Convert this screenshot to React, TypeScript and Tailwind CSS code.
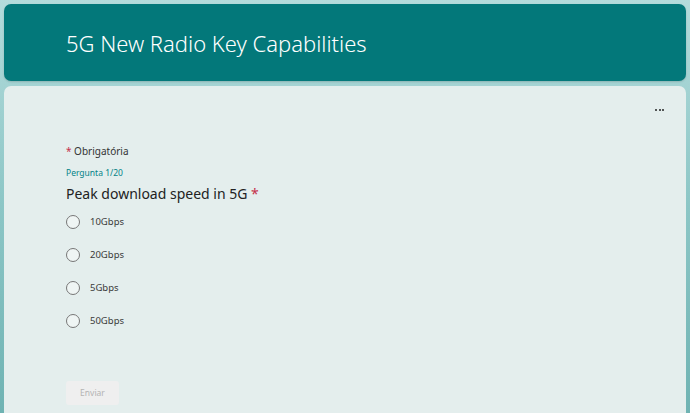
import React from "react";

const options = ["10Gbps", "20Gbps", "5Gbps", "50Gbps"];

export default function App() {
  return (
    <div
      className="w-[690px] h-[413px] overflow-hidden bg-gradient-to-b from-[#b4dcdc] via-[#8cc6c6] to-[#6fb3b3] px-[4px] pt-[4px] flex flex-col gap-[5px]"
      style={{ fontFamily: '"Noto Sans", "Open Sans", sans-serif' }}
    >
      <div className="h-[77px] shrink-0 rounded-[7px] bg-[#03787a] flex items-center pl-[62px] pt-[2px] shadow-[0_1px_2px_rgba(0,0,0,0.15)]">
        <h1 className="text-white text-[22px] font-light tracking-[0px]">
          5G New Radio Key Capabilities
        </h1>
      </div>
      <div className="flex-1 rounded-t-[7px] bg-[#e4eeed] relative pl-[62px] pt-[58px]">
        <div className="absolute right-[22px] top-[23px] flex gap-[1.5px]">
          <span className="w-[2px] h-[2px] rounded-full bg-[#222]" />
          <span className="w-[2px] h-[2px] rounded-full bg-[#222]" />
          <span className="w-[2px] h-[2px] rounded-full bg-[#222]" />
        </div>
        <div className="text-[10px] text-[#333] leading-[14px]">
          <span className="text-[#c4314b]">*</span> Obrigatória
        </div>
        <div className="mt-[9px] text-[8.5px] text-[#038387] leading-[12px]">Pergunta 1/20</div>
        <div className="mt-[5px] text-[14px] text-[#222] leading-[20px]">
          Peak download speed in 5G <span className="text-[#c4314b]">*</span>
        </div>
        <div className="mt-[11px] flex flex-col gap-[19px]">
          {options.map((o) => (
            <div key={o} className="flex items-center gap-[10px] h-[14px]">
              <div className="w-[14px] h-[14px] rounded-full border border-[#777] bg-white/40" />
              <span className="text-[9.5px] text-[#3a3a3a]">{o}</span>
            </div>
          ))}
        </div>
        <button className="mt-[53px] w-[53px] h-[24px] rounded-[3px] bg-[#efefef] text-[8.5px] text-[#b3b3b3]">
          Enviar
        </button>
      </div>
    </div>
  );
}
